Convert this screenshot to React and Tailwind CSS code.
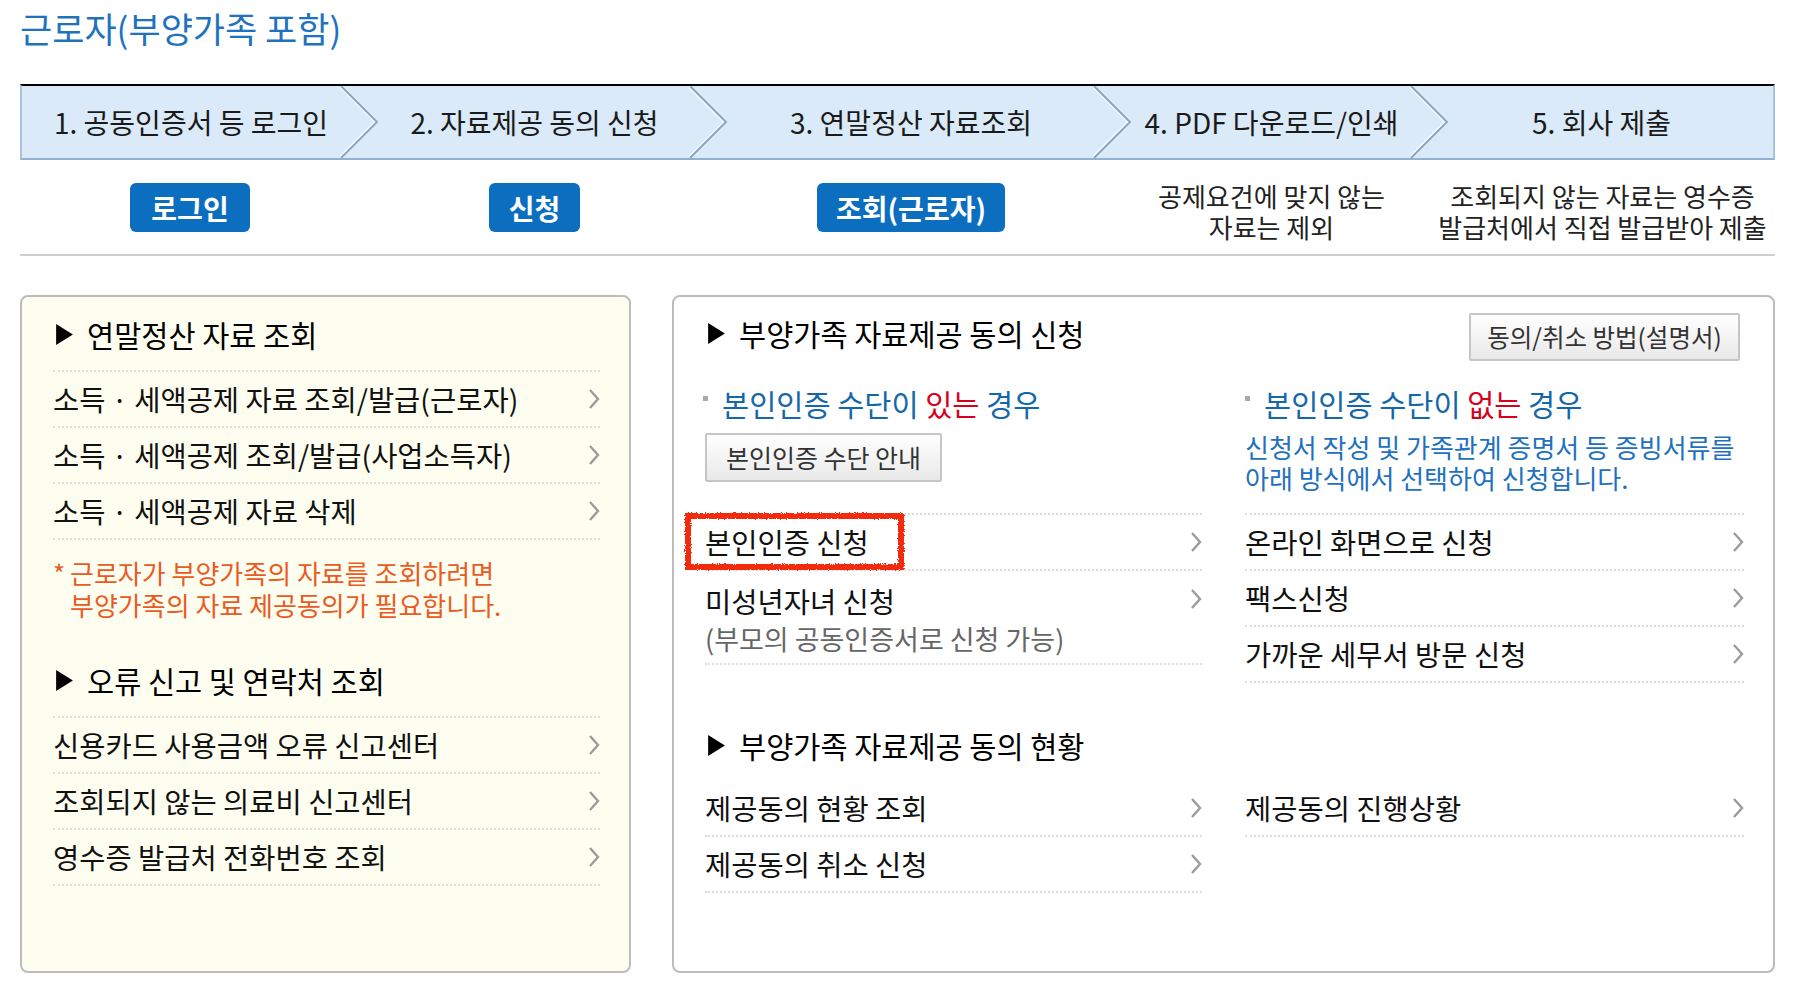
import React from "react";

const Chevron = () => (
  <svg width="12" height="20" viewBox="0 0 12 20" className="shrink-0">
    <polyline points="2,1 10,10 2,19" fill="none" stroke="#9b9b9b" strokeWidth="2.4" />
  </svg>
);

const Triangle = () => (
  <svg width="17" height="21" viewBox="0 0 16 20" className="shrink-0">
    <polygon points="0,0 16,10 0,20" fill="#000" />
  </svg>
);

const steps = [
  { cls: "w-[338px]", label: "1. 공동인증서 등 로그인" },
  { cls: "w-[349px]", label: "2. 자료제공 동의 신청" },
  { cls: "w-[404px]", label: "3. 연말정산 자료조회" },
  { cls: "w-[317px]", label: "4. PDF 다운로드/인쇄" },
  { cls: "w-[343px]", label: "5. 회사 제출" },
];

const Row = ({ children, tall }) => (
  <div
    className={
      "relative flex justify-between border-b-2 border-dotted border-[#dcdcdc] " +
      (tall ? "h-[94px] items-start pt-[10px]" : "h-[56px] items-center")
    }
  >
    {children}
  </div>
);

const Heading = ({ children }) => (
  <div className="flex h-[40px] items-center gap-[14px] pl-[3px] text-[29.5px] text-black">
    <Triangle />
    <span>{children}</span>
  </div>
);

const GrayButton = ({ children, className }) => (
  <div
    className={
      "flex items-center justify-center rounded-[2px] border-2 border-[#c6c6c6] bg-linear-to-b from-white to-[#e9e9e9] text-[#333] " +
      className
    }
  >
    {children}
  </div>
);

const SubHead = ({ mark }) => (
  <div className="flex h-[40px] items-start">
    <span className="mt-[13px] h-[5px] w-[5px] shrink-0 bg-[#a9a9a9]" />
    <span className="ml-[14px] text-[29.5px] leading-[40px] text-[#1567ab]">
      본인인증 수단이 <span className="text-[#d8001b]">{mark}</span> 경우
    </span>
  </div>
);

export default function App() {
  return (
    <div className="min-h-screen w-full bg-white pl-[20px] pt-[8px] font-['Noto_Sans_CJK_KR','Noto_Sans',sans-serif]">
      <div className="w-[1755px]">
        <h1 className="text-[35px] leading-[40px] text-[#1e72be]">근로자(부양가족 포함)</h1>

        {/* step bar */}
        <div className="mt-[36px] flex h-[76px] border-2 border-t-black border-b-[#93b2d3] border-l-[#a9c3dd] border-r-[#a9c3dd] bg-[#dbeaf8]">
          {steps.map((s, i) => (
            <div key={i} className={"relative flex items-center justify-center text-[28px] text-[#1a1a1a] " + s.cls}>
              {s.label}
              {i < 4 && (
                <svg
                  className="absolute right-[-20px] top-0 z-10 h-full w-[40px]"
                  viewBox="0 0 40 72"
                  preserveAspectRatio="none"
                >
                  <polyline points="-1,0 35,36 -1,72" fill="none" stroke="#f4f9fe" strokeWidth="2" />
                  <polyline points="1,0 37,36 1,72" fill="none" stroke="#8ba2bc" strokeWidth="1.8" />
                </svg>
              )}
            </div>
          ))}
        </div>

        <div className="mt-[20px] flex h-[62px] items-start">
          <div className="flex w-[340px] justify-center">
            <div className="mt-[3px] flex h-[49px] items-center rounded-[6px] bg-[#0b6ebf] px-[21px] text-[28px] font-bold text-white">로그인</div>
          </div>
          <div className="flex w-[349px] justify-center">
            <div className="mt-[3px] flex h-[49px] items-center rounded-[6px] bg-[#0b6ebf] px-[20px] text-[28px] font-bold text-white">신청</div>
          </div>
          <div className="flex w-[404px] justify-center">
            <div className="mt-[3px] flex h-[49px] items-center rounded-[6px] bg-[#0b6ebf] px-[19px] text-[28px] font-bold text-white">조회(근로자)</div>
          </div>
          <div className="w-[317px] text-center text-[26px] leading-[31px] text-[#222]">
            <div>공제요건에 맞지 않는</div>
            <div>자료는 제외</div>
          </div>
          <div className="w-[345px] text-center text-[26px] leading-[31px] text-[#222]">
            <div>조회되지 않는 자료는 영수증</div>
            <div>발급처에서 직접 발급받아 제출</div>
          </div>
        </div>

        <div className="mt-[12px] h-[2px] bg-[#cfcfcf]" />

        <div className="mt-[39px] flex gap-[41px]">
          {/* left panel */}
          <div className="h-[678px] w-[611px] rounded-[8px] border-2 border-[#bcbcbc] bg-[#fefef0] pl-[31px] pr-[29px] pt-[17px] text-[28.5px] text-[#111]">
            <Heading>연말정산 자료 조회</Heading>
            <div className="mt-[16px] border-t-2 border-dotted border-[#dcdcdc]">
              <Row><span>소득 · 세액공제 자료 조회/발급(근로자)</span><Chevron /></Row>
              <Row><span>소득 · 세액공제 조회/발급(사업소득자)</span><Chevron /></Row>
              <Row><span>소득 · 세액공제 자료 삭제</span><Chevron /></Row>
            </div>
            <div className="mt-[17px] flex text-[26px] leading-[32px] text-[#eb5a1e]">
              <span className="w-[17px] shrink-0">*</span>
              <div>
                <div>근로자가 부양가족의 자료를 조회하려면</div>
                <div>부양가족의 자료 제공동의가 필요합니다.</div>
              </div>
            </div>
            <div className="mt-[39px]">
              <Heading>오류 신고 및 연락처 조회</Heading>
            </div>
            <div className="mt-[16px] border-t-2 border-dotted border-[#dcdcdc]">
              <Row><span>신용카드 사용금액 오류 신고센터</span><Chevron /></Row>
              <Row><span>조회되지 않는 의료비 신고센터</span><Chevron /></Row>
              <Row><span>영수증 발급처 전화번호 조회</span><Chevron /></Row>
            </div>
          </div>

          {/* right panel */}
          <div className="h-[678px] w-[1103px] rounded-[8px] border-2 border-[#bcbcbc] bg-white pl-[31px] pr-[29px] pt-[16px] text-[28.5px] text-[#111]">
            <div className="flex items-start justify-between">
              <Heading>부양가족 자료제공 동의 신청</Heading>
              <GrayButton className="mr-[4px] h-[48px] w-[271px] text-[24.5px]">동의/취소 방법(설명서)</GrayButton>
            </div>

            <div className="flex gap-[43px]">
              <div className="w-[497px]">
                <div className="mt-[22px] ml-[-2px]">
                  <SubHead mark="있는" />
                </div>
                <GrayButton className="mt-[10px] h-[49px] w-[237px] text-[25px]">본인인증 수단 안내</GrayButton>
                <div className="mt-[31px] border-t-2 border-dotted border-[#dcdcdc]">
                  <Row>
                    <span>본인인증 신청</span>
                    <Chevron />
                    <svg className="pointer-events-none absolute left-[-22px] top-[-5px]" width="228" height="66">
                      <defs>
                        <filter id="rough">
                          <feTurbulence type="fractalNoise" baseFrequency="0.9" numOctaves="2" result="n" />
                          <feDisplacementMap in="SourceGraphic" in2="n" scale="3.5" />
                        </filter>
                      </defs>
                      <rect x="5" y="6" width="213" height="51" fill="none" stroke="#f42a0c" strokeWidth="6" filter="url(#rough)" />
                    </svg>
                  </Row>
                  <Row tall>
                    <div>
                      <div className="leading-[40px]">미성년자녀 신청</div>
                      <div className="text-[27px] leading-[36px] text-[#666]">(부모의 공동인증서로 신청 가능)</div>
                    </div>
                    <div className="mt-[8px]">
                      <Chevron />
                    </div>
                  </Row>
                </div>
              </div>

              <div className="w-[499px]">
                <div className="mt-[22px]">
                  <SubHead mark="없는" />
                </div>
                <div className="mt-[8px] text-[26px] leading-[31px] text-[#2270c0]">
                  <div>신청서 작성 및 가족관계 증명서 등 증빙서류를</div>
                  <div>아래 방식에서 선택하여 신청합니다.</div>
                </div>
                <div className="mt-[20px] border-t-2 border-dotted border-[#dcdcdc]">
                  <Row><span>온라인 화면으로 신청</span><Chevron /></Row>
                  <Row><span>팩스신청</span><Chevron /></Row>
                  <Row><span>가까운 세무서 방문 신청</span><Chevron /></Row>
                </div>
              </div>
            </div>

            <div className="mt-[42px]">
              <Heading>부양가족 자료제공 동의 현황</Heading>
            </div>
            <div className="mt-[16px] flex gap-[43px]">
              <div className="w-[497px]">
                <Row><span>제공동의 현황 조회</span><Chevron /></Row>
                <Row><span>제공동의 취소 신청</span><Chevron /></Row>
              </div>
              <div className="w-[499px]">
                <Row><span>제공동의 진행상황</span><Chevron /></Row>
              </div>
            </div>
          </div>
        </div>
      </div>
    </div>
  );
}
